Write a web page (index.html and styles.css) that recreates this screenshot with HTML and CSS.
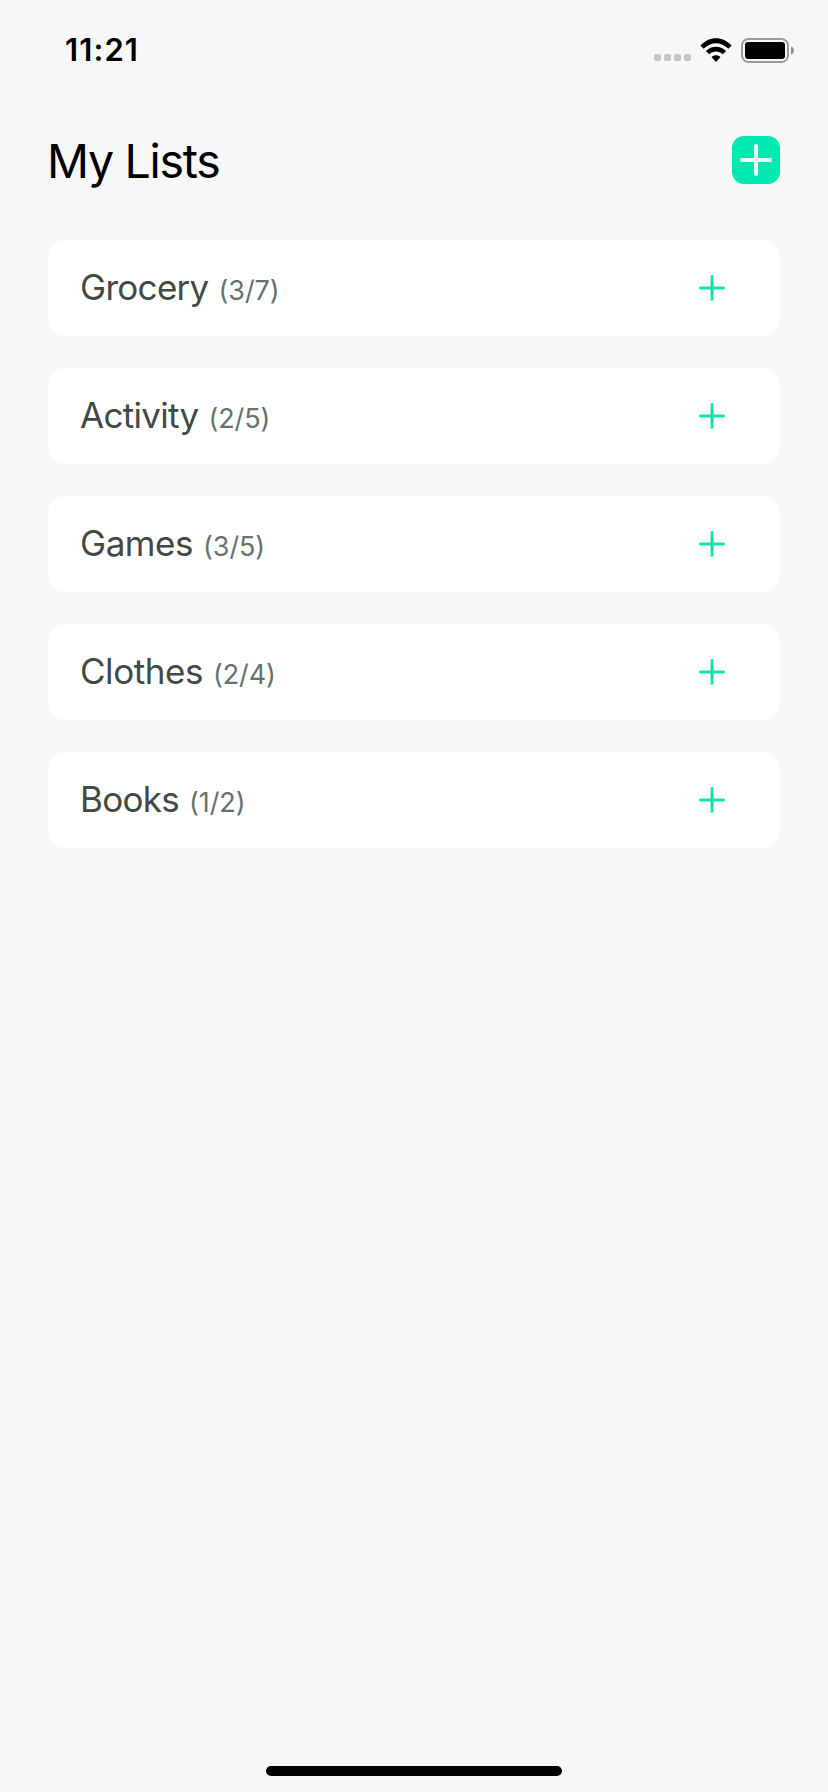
FILE: index.html
```
<!DOCTYPE html>
<html lang="en">
<head>
<meta charset="utf-8">
<title>My Lists</title>
<link rel="stylesheet" href="styles.css">
</head>
<body>
<div class="screen">
  <div class="status-bar">
    <span class="time">11:21</span>
    <div class="indicators">
      <div class="signal"><i></i><i></i><i></i><i></i></div>
      <svg class="wifi" width="32" height="24" viewBox="0 0 32 24">
        <path d="M.4 7.6C9-2.3 23-2.3 31.6 7.6L28.4 10.8C21.4 3.3 10.6 3.3 3.6 10.8Z"/>
        <path d="M5.9 13.1C11.5 7.2 20.5 7.2 26.1 13.1L22.8 16.3C19 12.5 13 12.5 9.2 16.3Z"/>
        <path d="M11.5 18.9C14 16.7 18 16.7 20.5 18.9L16 23.9Z"/>
      </svg>
      <svg class="battery" width="54" height="25" viewBox="0 0 54 25">
        <rect class="battery-case" x="1" y="1" width="46" height="23" rx="6.5"/>
        <rect x="4" y="4" width="40" height="17" rx="3"/>
        <path class="battery-nub" d="M50 8.3C54 9.7 54 15.3 50 16.7Z"/>
      </svg>
    </div>
  </div>
  <header class="header">
    <h1 class="title">My Lists</h1>
    <button class="add-list" aria-label="Add list">
      <svg width="32" height="32" viewBox="0 0 32 32"><path d="M16 2V30M2 16H30"/></svg>
    </button>
  </header>
  <main class="lists">
    <div class="card">
      <span class="name">Grocery</span><span class="count">(3/7)</span>
      <svg class="plus" width="26" height="26" viewBox="0 0 26 26"><path d="M13 1.400V24.600M1.400 13H24.600"/></svg>
    </div>
    <div class="card">
      <span class="name">Activity</span><span class="count">(2/5)</span>
      <svg class="plus" width="26" height="26" viewBox="0 0 26 26"><path d="M13 1.400V24.600M1.400 13H24.600"/></svg>
    </div>
    <div class="card">
      <span class="name loose">Games</span><span class="count">(3/5)</span>
      <svg class="plus" width="26" height="26" viewBox="0 0 26 26"><path d="M13 1.400V24.600M1.400 13H24.600"/></svg>
    </div>
    <div class="card">
      <span class="name loose">Clothes</span><span class="count">(2/4)</span>
      <svg class="plus" width="26" height="26" viewBox="0 0 26 26"><path d="M13 1.400V24.600M1.400 13H24.600"/></svg>
    </div>
    <div class="card">
      <span class="name">Books</span><span class="count">(1/2)</span>
      <svg class="plus" width="26" height="26" viewBox="0 0 26 26"><path d="M13 1.400V24.600M1.400 13H24.600"/></svg>
    </div>
  </main>
  <div class="home-indicator"></div>
</div>
</body>
</html>
```
FILE: styles.css
```
* { box-sizing: border-box; }
body { margin: 0; }
.screen {
  display: flex;
  flex-direction: column;
  width: 828px;
  height: 1792px;
  padding-bottom: 16px;
  background: #f7f7f7;
  font-family: Inter, "Liberation Sans", sans-serif;
  color: #000;
}
.status-bar {
  display: flex;
  justify-content: space-between;
  align-items: center;
  height: 100px;
  padding: 0 33px 0 65px;
}
.time {
  font-size: 31px;
  font-weight: 600;
  line-height: 40px;
  letter-spacing: 1.1px;
}
.indicators { display: flex; align-items: center; }
.signal {
  display: flex;
  gap: 3px;
  align-self: flex-end;
  margin: 0 9px 2px 0;
}
.signal i {
  width: 7px;
  height: 7px;
  border-radius: 2px;
  background: #c6c6c6;
}
.wifi { margin-right: 9px; }
.battery-case { fill: none; stroke: #9b9b9b; stroke-width: 2; }
.battery-nub { fill: #8f8f8f; }
.header {
  display: flex;
  justify-content: space-between;
  align-items: center;
  height: 120px;
  padding: 0 48px;
}
.title {
  margin: 2px 0 0 -1px;
  font-size: 46.5px;
  font-weight: 400;
  line-height: 56px;
  letter-spacing: -1.3px;
}
.add-list {
  display: flex;
  align-items: center;
  justify-content: center;
  width: 48px;
  height: 48px;
  padding: 0;
  border: 0;
  border-radius: 12px;
  background: #00e9b0;
}
.add-list path { stroke: #f7f7f7; stroke-width: 4; stroke-linecap: round; }
.lists {
  display: flex;
  flex-direction: column;
  gap: 32px;
  padding: 20px 48px 0;
}
.card {
  display: flex;
  align-items: baseline;
  height: 96px;
  padding: 0 55px 0 32px;
  border-radius: 16px;
  background: #fff;
  line-height: 94px;
}
.name {
  font-size: 35px;
  letter-spacing: -0.7px;
  color: #414a44;
}
.name.loose { letter-spacing: -0.45px; }
.count {
  margin-left: 10px;
  font-size: 27px;
  letter-spacing: -0.1px;
  color: #66736b;
}
.plus { align-self: center; margin-left: auto; }
.plus path { stroke: #00e9b0; stroke-width: 2.8; stroke-linecap: round; }
.home-indicator {
  align-self: center;
  width: 296px;
  height: 10px;
  margin-top: auto;
  border-radius: 5px;
  background: #000;
}
```
